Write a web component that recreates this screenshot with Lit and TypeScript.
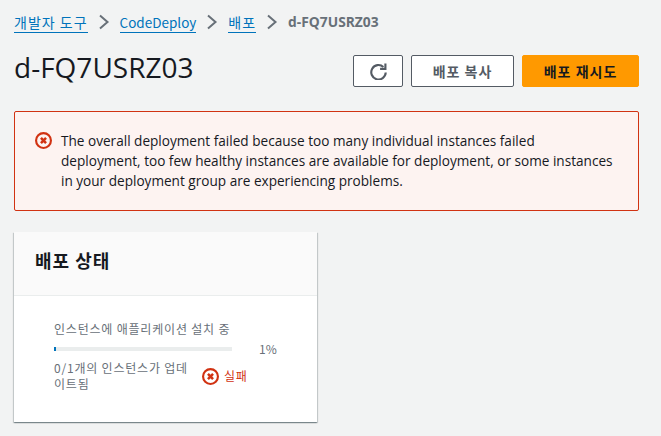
import { LitElement, html, css } from "lit";
import { customElement } from "lit/decorators.js";

const errorIcon = (cls: string) => html`<svg class=${cls} viewBox="0 0 16 16" fill="none" stroke="#d13212" stroke-width="2">
  <circle cx="8" cy="8" r="7"></circle>
  <path d="M5.6 5.6l4.8 4.8M10.4 5.6l-4.8 4.8" stroke-width="2.4"></path>
</svg>`;

const chevron = html`<svg class="chev" viewBox="0 0 12 16" fill="none" stroke="#687078" stroke-width="2"><path d="M2 1.5l7.5 6.5-7.5 6.5"></path></svg>`;

@customElement("app-root")
export class AppRoot extends LitElement {
  static styles = css`
    :host {
      display: block;
      width: 661px;
      height: 436px;
      overflow: hidden;
      background: #f2f3f3;
      color: #16191f;
      font-family: "Open Sans", "Noto Sans CJK KR", sans-serif;
      font-size: 14px;
      box-sizing: border-box;
    }
    .page { padding: 11px 22px 0 14px; display: flex; flex-direction: column; }
    .crumbs { display: flex; align-items: center; height: 22px; font-size: 14px; line-height: 20px; }
    .crumbs a { color: #0073bb; border-bottom: 1px solid #0073bb; line-height: 20px; height: 20px; font-family: "Noto Sans CJK KR", sans-serif; font-size: 14px; letter-spacing: 1px; }
    .crumbs a.lat { letter-spacing: 0; font-size: 13.5px; }
    .crumbs .cur { color: #687078; font-weight: 700; font-size: 13.8px; }
    .chev { width: 12px; height: 16px; margin: 0 10px; }
    .head { display: flex; justify-content: space-between; margin-top: 11px; height: 53px; }
    h1 { margin: 6px 0 0; font-size: 28px; font-weight: 400; line-height: 34px; }
    .btns { display: flex; gap: 8px; margin-top: 11px; }
    button {
      height: 32px; box-sizing: border-box; border: 1px solid #545b64; border-radius: 2px; background: #fff;
      color: #545b64; font: 700 14px "Noto Sans CJK KR", sans-serif; letter-spacing: 1px; padding: 0; display: flex; align-items: center; justify-content: center;
    }
    .refresh { width: 50px; }
    .refresh svg { width: 17px; height: 17px; }
    .copy { width: 103px; }
    .retry { width: 117px; background: #ff9900; border-color: #ff9900; color: #16191f; }
    .alert {
      margin-top: 14px; height: 100px; box-sizing: border-box; border: 1px solid #d13212; border-radius: 2px;
      background: #fdf3f1; display: flex; padding: 19px 20px 0 20px; gap: 9px;
    }
    .alert p { margin: 0; line-height: 20px; font-size: 13.6px; }
    .ico { width: 17px; height: 17px; flex: none; margin-top: 1px; }
    .card {
      margin-top: 21px; width: 303px; height: 190px; background: #fff; box-shadow: 0 1px 1px 0 rgba(0,28,36,.3), 1px 1px 1px 0 rgba(0,28,36,.15), -1px 1px 1px 0 rgba(0,28,36,.15);
      display: flex; flex-direction: column;
    }
    .card-h { height: 64px; box-sizing: border-box; background: #fafafa; border-bottom: 1px solid #eaeded; padding: 16px 21px 0; flex: none; }
    h2 { margin: 0; font: 700 18px/24px "Noto Sans CJK KR", sans-serif; letter-spacing: 1px; }
    .card-b { padding: 25px 0 0 40px; color: #687078; font: 400 12px/16px "Noto Sans CJK KR", sans-serif; letter-spacing: .8px; }
    .step { width: 190px; }
    .bar-row { display: flex; align-items: center; margin-top: 4px; height: 16px; }
    .bar { width: 178px; height: 4px; background: #eaeded; flex: none; }
    .fill { height: 100%; background: #0073bb; }
    .pct { margin-left: 27px; letter-spacing: 0; }
    .st { display: flex; align-items: center; margin-top: 3px; }
    .st-t { width: 136px; flex: none; }
    .ico2 { width: 17px; height: 17px; margin-left: 12px; flex: none; }
    .fail { color: #d13212; margin-left: 5px; }
  `;

  render() {
    return html`<div class="page">
      <nav class="crumbs">
        <a>개발자 도구</a>${chevron}<a class="lat">CodeDeploy</a>${chevron}<a>배포</a>${chevron}<span class="cur">d-FQ7USRZ03</span>
      </nav>
      <div class="head">
        <h1>d-FQ7USRZ03</h1>
        <div class="btns">
          <button class="refresh" aria-label="refresh">
            <svg viewBox="0 0 16 16" fill="none" stroke="#545b64" stroke-width="2">
              <path d="M12.6 3.7A6.8 6.8 0 1 0 14.8 9"></path>
              <path d="M14.5 .5v5h-5" stroke-linejoin="miter"></path>
            </svg>
          </button>
          <button class="copy">배포 복사</button>
          <button class="retry">배포 재시도</button>
        </div>
      </div>
      <div class="alert">
        ${errorIcon("ico")}
        <p>The overall deployment failed because too many individual instances failed<br>deployment, too few healthy instances are available for deployment, or some instances<br>in your deployment group are experiencing problems.</p>
      </div>
      <section class="card">
        <div class="card-h"><h2>배포 상태</h2></div>
        <div class="card-b">
          <div class="step">인스턴스에 애플리케이션 설치 중</div>
          <div class="bar-row"><div class="bar"><div class="fill" style="width:1.2%"></div></div><span class="pct">1%</span></div>
          <div class="st">
            <div class="st-t">0/1개의 인스턴스가 업데이트됨</div>
            ${errorIcon("ico2")}<span class="fail">실패</span>
          </div>
        </div>
      </section>
    </div>`;
  }
}
